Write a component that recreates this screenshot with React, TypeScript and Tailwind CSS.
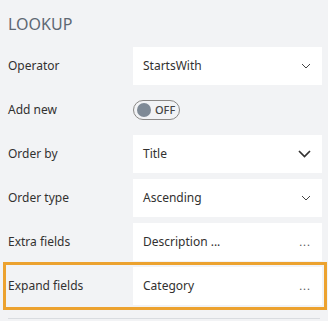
import React from "react";

const font = { fontFamily: '"Noto Sans", "Open Sans", sans-serif' };

const SmallChevron = () => (
  <svg width="10" height="6" viewBox="0 0 10 6" fill="none">
    <path d="M1 1l4 4 4-4" stroke="#444" strokeWidth="1" />
  </svg>
);

const BigChevron = () => (
  <svg width="13" height="8" viewBox="0 0 13 8" fill="none">
    <path d="M1 1l5.5 5.5L12 1" stroke="#323130" strokeWidth="1.7" />
  </svg>
);

const Box = ({ value, right }: { value: string; right: React.ReactNode }) => (
  <div className="flex h-[38px] flex-1 items-center justify-between bg-white pl-[10px] pr-[11px]">
    <span className="text-[12px] text-[#323130]">{value}</span>
    {right}
  </div>
);

const Row = ({
  label,
  children,
  active = false,
}: {
  label: string;
  children: React.ReactNode;
  active?: boolean;
}) => (
  <div
    className={
      "flex h-[44px] items-center px-[3px] " +
      (active ? "outline-3 -outline-offset-1 outline-[#eca22f]" : "")
    }
  >
    <div className="w-[125px] text-[12px] text-[#323130]">{label}</div>
    {children}
  </div>
);

const Dots = () => <span className="text-[11px] tracking-[1px] text-[#555]">...</span>;

export default function App() {
  return (
    <div className="h-[321px] w-[328px] overflow-hidden bg-[#f2f3f5]" style={font}>
      <div className="flex h-[44px] items-center px-[8px] pt-[3px] text-[16px] text-[#5e6873]">
        LOOKUP
      </div>
      <div className="pl-[5px] pr-[3px]">
        <Row label="Operator">
          <Box value="StartsWith" right={<SmallChevron />} />
        </Row>
        <Row label="Add new">
          <div className="flex h-[20px] w-[47px] items-center gap-[4px] rounded-full border border-[#8a8886] pl-[3px]">
            <span className="h-[14px] w-[14px] rounded-full bg-[#7f8a96]" />
            <span className="text-[11px] font-medium text-[#444]">OFF</span>
          </div>
        </Row>
        <Row label="Order by">
          <Box value="Title" right={<BigChevron />} />
        </Row>
        <Row label="Order type">
          <Box value="Ascending" right={<SmallChevron />} />
        </Row>
        <Row label="Extra fields">
          <Box value="Description ..." right={<Dots />} />
        </Row>
        <Row label="Expand fields" active>
          <Box value="Category" right={<Dots />} />
        </Row>
      </div>
      <div className="mx-[8px] mt-[10px] border-t border-[#d9dce0]" />
    </div>
  );
}
